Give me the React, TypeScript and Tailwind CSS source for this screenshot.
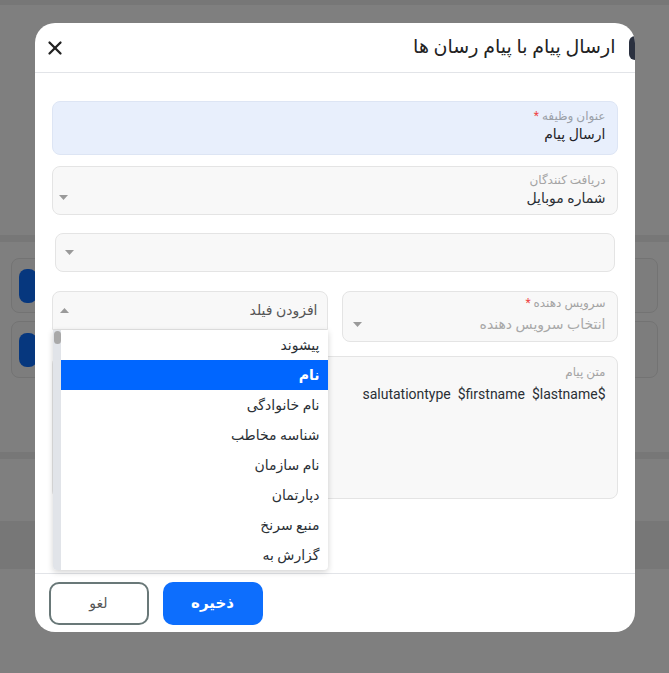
import React from 'react';
import { X } from 'lucide-react';

const fieldOptions = ['پیشوند', 'نام', 'نام خانوادگی', 'شناسه مخاطب', 'نام سازمان', 'دپارتمان', 'منبع سرنخ', 'گزارش به'];

const Caret = ({ up = false }: { up?: boolean }) => (
  <svg width="9" height="5" viewBox="0 0 9 5" className="shrink-0">
    {up ? <path d="M0 5 L4.5 0 L9 5 Z" fill="#9a9a9a" /> : <path d="M0 0 L9 0 L4.5 5 Z" fill="#9a9a9a" />}
  </svg>
);

const Background = () => (
  <div className="h-[673px] w-full bg-white">
    <div className="h-[5px] bg-[#eeeeee]" />
    <div className="h-[230px]" />
    <div className="h-[7px] bg-[#eeeeee]" />
    <div className="flex flex-col gap-[8px] px-[11px] pt-[16px]">
      <div className="flex h-[55px] items-center rounded-lg border border-[#e6e6e6] bg-[#fafafa] px-[7px]">
        <div className="h-[34px] w-[18px] rounded-lg bg-[#0d6efd]" />
      </div>
      <div className="flex h-[57px] items-center rounded-lg border border-[#e6e6e6] bg-[#fafafa] px-[7px]">
        <div className="h-[34px] w-[18px] rounded-lg bg-[#0d6efd]" />
      </div>
    </div>
    <div className="mt-[74px] h-[7px] bg-[#eeeeee]" />
    <div className="mt-[62px] h-[48px] bg-[#eeeeee]" />
  </div>
);

export default function App() {
  return (
    <div className="relative h-[673px] w-[669px] overflow-hidden" style={{ fontFamily: 'Roboto, "DejaVu Sans", sans-serif' }}>
      <Background />
      <div className="absolute inset-0 flex justify-center bg-black/50 pt-[23px]">
        <div dir="rtl" className="relative flex h-[609px] w-[600px] flex-col overflow-hidden rounded-[20px] bg-white">
          <div className="absolute -right-[8px] top-[13px] h-[24px] w-[14px] rounded-md bg-[#2b3140]" />
          <div className="flex h-[50px] shrink-0 items-center justify-between border-b border-[#e2e4e8] pl-[9px] pr-[19px]">
            <h2 className="text-[19px] text-[#222]">ارسال پیام با پیام رسان ها</h2>
            <X size={22} strokeWidth={2.5} className="text-[#222]" />
          </div>

          <div className="relative flex h-[500px] flex-col px-[17px] pt-[28px]">
            <div className="flex h-[54px] flex-col rounded-lg border border-[#dde5f4] bg-[#e8effc] px-[11px] pt-[6px]">
              <span className="text-[12px] leading-4 text-[#9aa0a8]">
                عنوان وظیفه <span className="text-[#ef4444]">*</span>
              </span>
              <span className="text-[14px] leading-5 text-[#1f2328]">ارسال پیام</span>
            </div>

            <div className="mt-[11px] flex h-[49px] items-end justify-between rounded-lg border border-[#e4e4e4] bg-[#f8f8f8] pb-[6px] pl-[6px] pr-[11px]">
              <div className="flex flex-col">
                <span className="text-[12px] leading-4 text-[#a4a4a4]">دریافت کنندگان</span>
                <span className="text-[14px] leading-5 text-[#2a2f35]">شماره موبایل</span>
              </div>
              <div className="pb-[8px]"><Caret /></div>
            </div>

            <div className="mx-[3px] mt-[18px] flex h-[39px] items-center justify-end rounded-lg border border-[#e4e4e4] bg-[#f8f8f8] pl-[9px]">
              <Caret />
            </div>

            <div className="mt-[19px] grid grid-cols-2 gap-[14px]">
              <div className="flex h-[51px] items-start justify-between rounded-lg border border-[#e4e4e4] bg-[#f8f8f8] pl-[10px] pr-[11px] pt-[3px]">
                <div className="flex flex-col">
                  <span className="text-[12px] leading-4 text-[#a4a4a4]">
                    سرویس دهنده <span className="text-[#ef4444]">*</span>
                  </span>
                  <span className="mt-[3px] text-[14px] leading-5 text-[#a8a8a8]">انتخاب سرویس دهنده</span>
                </div>
                <div className="pt-[27px]"><Caret /></div>
              </div>

              <div className="relative z-10">
                <div className="flex h-[39px] items-center justify-between rounded-t-lg border border-[#e4e4e4] bg-[#f8f8f8] pl-[7px] pr-[9px]">
                  <span className="text-[14px] text-[#555]">افزودن فیلد</span>
                  <Caret up />
                </div>
                <div className="absolute left-[1px] right-0 top-[39px] flex h-[240px] overflow-hidden rounded-b bg-white shadow-[0_2px_6px_rgba(0,0,0,0.18)]">
                  <div className="flex flex-1 flex-col">
                    {fieldOptions.map((opt, i) => (
                      <div
                        key={opt}
                        className={
                          i === 1
                            ? 'flex h-[30px] items-center bg-[#0066ff] pr-[8px] text-[14px] font-bold text-white'
                            : 'flex h-[30px] items-center pr-[8px] text-[14px] text-[#2a2f35]'
                        }
                      >
                        {opt}
                      </div>
                    ))}
                  </div>
                  <div className="w-[8px] bg-[#e1e4e9] pt-[1px]">
                    <div className="h-[13px] w-[7px] rounded-full bg-[#a9a9a9]" />
                  </div>
                </div>
              </div>
            </div>

            <div className="mt-[14px] flex h-[143px] flex-col rounded-lg border border-[#e4e4e4] bg-[#f8f8f8] px-[11px] pt-[7px]">
              <span className="text-[12px] leading-4 text-[#a4a4a4]">متن پیام</span>
              <span dir="ltr" className="mt-[4px] whitespace-pre text-right text-[14px] leading-5 text-[#2a2f35]">
                {'salutationtype  $firstname  $lastname$'}
              </span>
            </div>
          </div>

          <div dir="ltr" className="flex flex-1 items-start gap-[14px] border-t border-[#e2e4e8] pl-[14px] pt-[8px]">
            <button className="h-[43px] w-[100px] rounded-[10px] border-2 border-[#697878] bg-white text-[14px] text-[#555]">لغو</button>
            <button className="h-[43px] w-[100px] rounded-[10px] bg-[#0d6efd] text-[15px] font-bold text-white">ذخیره</button>
          </div>
        </div>
      </div>
    </div>
  );
}
